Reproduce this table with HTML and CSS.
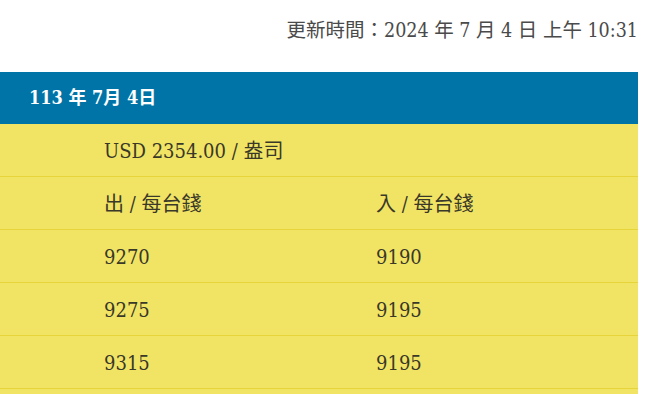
FILE: index.html
```html
<!DOCTYPE html>
<html lang="zh-Hant">
<head>
<meta charset="utf-8">
<title>金價</title>
<link rel="stylesheet" href="styles.css">
</head>
<body>
<div class="page">
  <p class="updated">更新時間：2024 年 7 月 4 日 上午 10:31</p>
  <div class="board">
    <div class="board-head">113 年 7月 4日</div>
    <div class="row">
      <div class="cell">USD 2354.00 / 盎司</div>
    </div>
    <div class="row">
      <div class="cell col-a">出 / 每台錢</div>
      <div class="cell">入 / 每台錢</div>
    </div>
    <div class="row">
      <div class="cell col-a">9270</div>
      <div class="cell">9190</div>
    </div>
    <div class="row">
      <div class="cell col-a">9275</div>
      <div class="cell">9195</div>
    </div>
    <div class="row">
      <div class="cell col-a">9315</div>
      <div class="cell">9195</div>
    </div>
    <div class="row"></div>
  </div>
</div>
</body>
</html>
```
FILE: styles.css
```css
html, body {
  margin: 0;
  padding: 0;
  background: #ffffff;
}
body {
  font-family: "DejaVu Serif Condensed", "Liberation Serif", "Noto Sans CJK TC", serif;
  font-size: 20px;
  color: #3a3828;
}
.page {
  width: 638px;
}
.updated {
  margin: 0;
  padding-top: 16px;
  height: 56px;
  line-height: 30px;
  font-size: 19.5px;
  text-align: right;
  color: #4a4a4a;
}
.board {
  background: #f1e465;
}
.board-head {
  background: #0074a6;
  color: #ffffff;
  font-size: 18px;
  font-weight: bold;
  height: 52px;
  line-height: 52px;
  padding-left: 29px;
}
.row {
  display: flex;
  height: 53px;
  box-sizing: border-box;
  border-bottom: 1px solid #e6d43a;
  padding-left: 104px;
}
.cell {
  line-height: 52px;
  padding-top: 1px;
  white-space: nowrap;
}
.col-a {
  width: 272px;
}
```
